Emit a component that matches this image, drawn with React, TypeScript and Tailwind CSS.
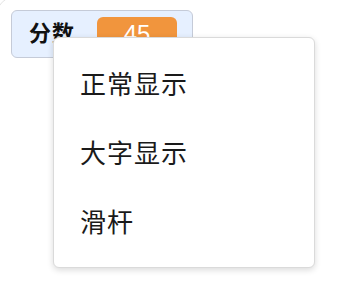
import React from "react";

const font = { fontFamily: '"Liberation Sans", "Noto Sans CJK SC", sans-serif' };

export default function App() {
  return (
    <div className="relative w-[342px] h-[290px] bg-white overflow-hidden" style={font}>
      <div className="-ml-[4px] -mt-[4px] w-[400px] h-[400px] rounded-[20px] border border-[#e3e3e3] pl-[14px] pt-[13px]">
        <div className="flex items-center w-[182px] h-[48px] rounded-[6px] border border-[#c5cbd8] bg-[#e6f0ff] pl-[17px] pr-[15px]">
          <span className="text-[22px] leading-none font-bold text-[#111] tracking-[1px]">分数</span>
          <div className="ml-auto flex h-[34px] w-[80px] items-start justify-center rounded-[6px] bg-[#f1953d] pt-[5px] text-[24px] leading-none text-white">
            45
          </div>
        </div>
      </div>
      <div className="absolute left-[53px] top-[37px] w-[262px] h-[231px] rounded-[6px] border border-[#dadada] bg-white py-[12px] shadow-[0_2px_6px_rgba(0,0,0,0.15)]">
        {["正常显示", "大字显示", "滑杆"].map((t) => (
          <div key={t} className="flex h-[69px] items-center px-[26px] text-[26px] leading-none text-[#1a1a1a] tracking-[1px]">
            {t}
          </div>
        ))}
      </div>
    </div>
  );
}
